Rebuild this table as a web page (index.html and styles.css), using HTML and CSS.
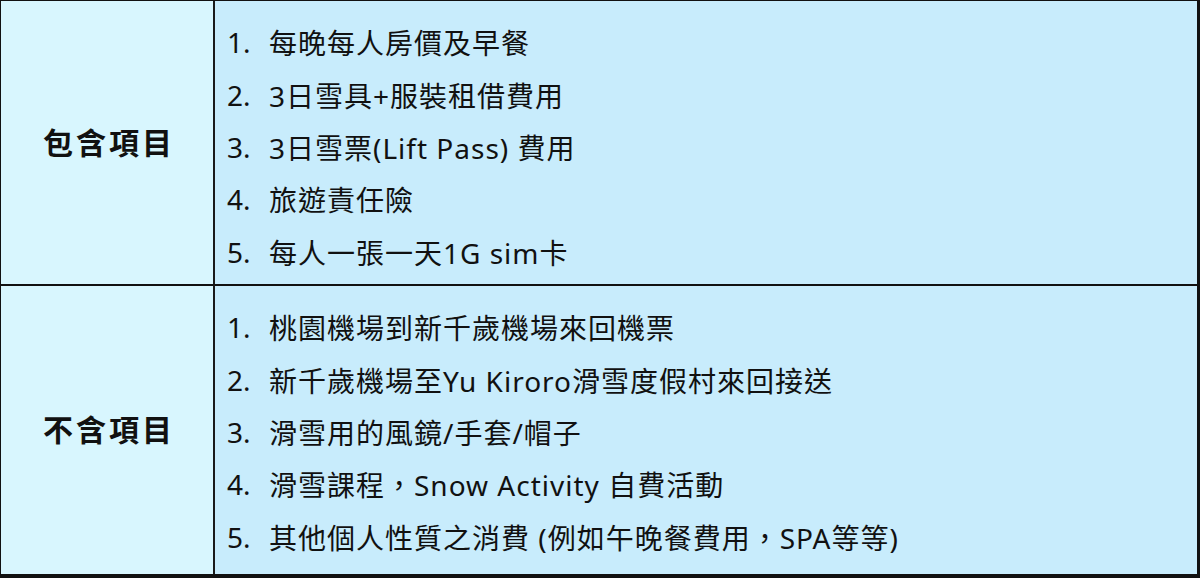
FILE: index.html
```html
<!DOCTYPE html>
<html lang="zh-Hant">
<head>
<meta charset="utf-8">
<link rel="stylesheet" href="styles.css">
</head>
<body>
<div class="table">
  <div class="label first">包含項目</div>
  <div class="items first">
    <ol class="list">
      <li><span class="num">1.</span><span class="txt">每晚每人房價及早餐</span></li>
      <li><span class="num">2.</span><span class="txt">3日雪具+服裝租借費用</span></li>
      <li><span class="num">3.</span><span class="txt">3日雪票(Lift Pass) 費用</span></li>
      <li><span class="num">4.</span><span class="txt">旅遊責任險</span></li>
      <li><span class="num">5.</span><span class="txt">每人一張一天1G sim卡</span></li>
    </ol>
  </div>
  <div class="label second">不含項目</div>
  <div class="items second">
    <ol class="list">
      <li><span class="num">1.</span><span class="txt">桃園機場到新千歲機場來回機票</span></li>
      <li><span class="num">2.</span><span class="txt">新千歲機場至Yu Kiroro滑雪度假村來回接送</span></li>
      <li><span class="num">3.</span><span class="txt">滑雪用的風鏡/手套/帽子</span></li>
      <li><span class="num">4.</span><span class="txt">滑雪課程，Snow Activity 自費活動</span></li>
      <li><span class="num">5.</span><span class="txt">其他個人性質之消費 (例如午晚餐費用，SPA等等)</span></li>
    </ol>
  </div>
</div>
</body>
</html>
```
FILE: styles.css
```css
html, body {
  margin: 0;
  padding: 0;
  background: #ffffff;
}
.table {
  box-sizing: border-box;
  width: 1200px;
  height: 578px;
  border-top: 1px solid #111;
  border-left: 1px solid #111;
  border-right: 3px solid #111;
  border-bottom: 4px solid #111;
  display: grid;
  grid-template-columns: 214px 1fr;
  grid-template-rows: 283px 290px;
  font-family: "Noto Sans", "Noto Sans CJK TC", sans-serif;
  color: #111;
}
.label {
  background: #d8f6fe;
  border-right: 2px solid #1a1a1a;
  display: flex;
  align-items: center;
  justify-content: center;
  padding: 0 0 4px 4px;
  font-family: "Noto Sans CJK TC", sans-serif;
  font-weight: 700;
  font-size: 30px;
  letter-spacing: 3px;
}
.items {
  background: #c8ecfc;
}
.second {
  border-top: 2px solid #111;
}
.items.first { padding-top: 15px; }
.items.second { padding-top: 15px; }
.list {
  list-style: none;
  margin: 0;
  padding: 0 0 0 12px;
}
.list li {
  display: flex;
  height: 52.4px;
  align-items: center;
  font-size: 28px;
  white-space: nowrap;
}
.num {
  width: 42px;
  flex: none;
}
.txt {
  letter-spacing: 1px;
}
```
